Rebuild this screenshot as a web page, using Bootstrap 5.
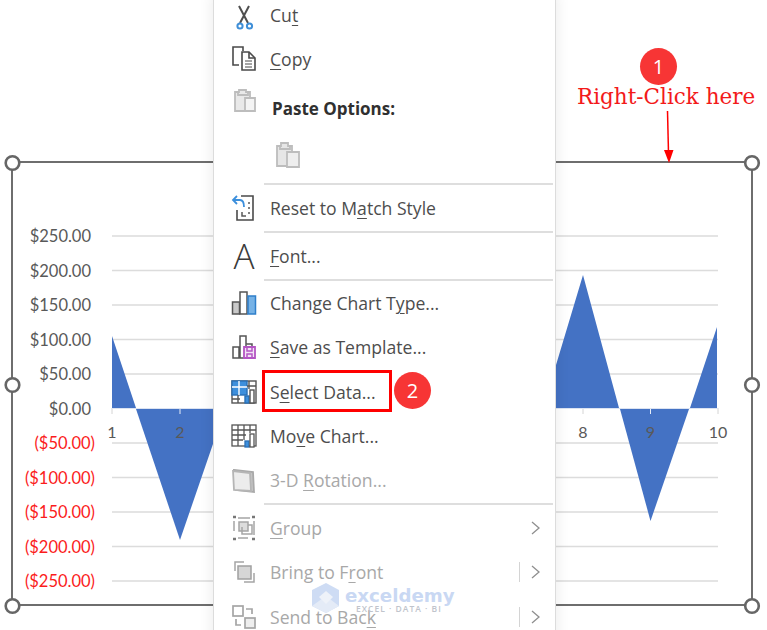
<!DOCTYPE html>
<html lang="en">
<head>
<meta charset="utf-8">
<title>Select Data context menu</title>
<link href="https://cdn.jsdelivr.net/npm/bootstrap@5.3.0/dist/css/bootstrap.min.css" rel="stylesheet">
<style>
html,body{margin:0;background:#fff;overflow:hidden}
.stage{width:767px;height:630px;overflow:hidden}
.chart-canvas{left:0;top:0}
.chart-canvas text{font-family:"Lato","Liberation Sans",sans-serif;font-size:16.5px;fill:#595959}
.chart-canvas text.neg{fill:#fb1c1c}
.chart-canvas text.xl{font-size:16px;text-anchor:middle}
.ctx-menu{left:213px;top:-7.5px;width:343px;background:#fff;border-left:1px solid #dcdcdc;border-right:1px solid #dcdcdc;box-shadow:0 0 14px rgba(0,0,0,.09);font-family:"Open Sans","Liberation Sans",sans-serif;font-size:17.6px;color:#4d4d4d;height:650px}
.ctx-row{height:44.4px;padding-left:17px;white-space:nowrap}
.ctx-row u{text-underline-offset:3px;text-decoration-thickness:1px}
.ctx-ico{width:26px;height:26px;flex:none;margin-right:13px;overflow:visible}
.ctx-off{color:#a8a8a8}
.ctx-paste-head{height:54px;font-weight:700;color:#303030;font-size:17px}
.ctx-paste-head .ctx-ico{margin-bottom:15px;margin-right:15px}
.ctx-paste-icon{height:47.5px;padding-bottom:8px;padding-left:61px}
.ctx-sep{height:2px;background:#dedede;margin-left:50px;margin-right:2px}
.ctx-tall{height:46px}
.ctx-gap{margin-top:1px}
.ctx-a{width:26px;margin-right:13px;font-size:35px;line-height:26px;text-align:center;font-weight:300;color:#3a3a3a}
.ctx-tail{right:14px;top:0;bottom:0}
.ctx-bar{width:1px;height:20px;background:#d4d4d4;margin-right:10px}
.ctx-chev{width:11px;height:16px}
.hilite{left:262px;top:370px;width:130px;height:42px;border:3px solid #f00}
.step{width:37px;height:37px;background:#f73535;color:#fff;font-family:"Open Sans","Liberation Sans",sans-serif;font-size:20px}
.step-a{left:640px;top:48px}
.step-b{left:394px;top:372px}
.note{left:577px;top:81px;font-family:"DejaVu Serif","Liberation Serif",serif;font-size:21.5px;line-height:32px;color:#f31a1a;white-space:nowrap}
.mark-canvas{left:0;top:0;pointer-events:none}
.wm-a{left:345px;top:581px;font-family:"DejaVu Sans","Liberation Sans",sans-serif;font-weight:700;font-size:18.2px;line-height:30px;color:#c9d8f3}
.wm-b{left:356px;top:602px;font-family:"Open Sans","Liberation Sans",sans-serif;font-weight:600;font-size:8.5px;line-height:14px;letter-spacing:1px;color:#c0c4cc;white-space:nowrap}
</style>
</head>
<body>
<div class="stage position-relative">

<svg class="chart-canvas position-absolute" width="767" height="630" viewBox="0 0 767 630">
  <g stroke="#dcdcdc" stroke-width="1.5">
    <path d="M112 236H718M112 270.5H718M112 305H718M112 339.5H718M112 374H718M112 443H718M112 477.5H718M112 512H718M112 546.5H718M112 581H718"/>
  </g>
  <path d="M112 408V414M180 408V414M583 408V414M650.500 408V414M718 408V414" stroke="#d4d4d4" stroke-width="1"/>
  <polygon fill="#4472c4" points="112,336 136,408 112,408"/>
  <polygon fill="#4472c4" points="136,409 225,409 180,540"/>
  <polygon fill="#4472c4" points="540,408 556,365 583,275 619,408"/>
  <polygon fill="#4472c4" points="620,409 689,409 650.500,521"/>
  <polygon fill="#4472c4" points="690,408 717,327 717,408"/>
  <path d="M112 408.500H718" stroke="#dbe3f2" stroke-width="1"/>
  <path d="M180 409V414M650.500 409V414" stroke="#e8eef8" stroke-width="1"/>
  <rect x="12" y="162" width="740" height="443" fill="none" stroke="#6e6e6e" stroke-width="2"/>
  <g fill="#fff" stroke="#666" stroke-width="2.600">
    <circle cx="12.500" cy="163" r="6.800"/><circle cx="752" cy="163" r="6.800"/>
    <circle cx="12.500" cy="385" r="6.800"/><circle cx="752" cy="385" r="6.800"/>
    <circle cx="12.500" cy="606" r="6.800"/><circle cx="752" cy="606" r="6.800"/>
  </g>
  <g text-anchor="end">
    <text x="91" y="242">$250.00</text><text x="91" y="276.500">$200.00</text><text x="91" y="311">$150.00</text>
    <text x="91" y="345.500">$100.00</text><text x="91" y="380">$50.00</text><text x="91" y="414.500">$0.00</text>
    <text class="neg" x="95" y="449">($50.00)</text><text class="neg" x="95" y="484">($100.00)</text>
    <text class="neg" x="95" y="518">($150.00)</text><text class="neg" x="95" y="553">($200.00)</text><text class="neg" x="95" y="587">($250.00)</text>
  </g>
  <text class="xl" x="112" y="438">1</text><text class="xl" x="180" y="438">2</text>
  <text class="xl" x="583" y="438">8</text><text class="xl" x="650.500" y="438">9</text><text class="xl" x="718" y="438">10</text>
  <path d="M667.500 111L668.500 153" stroke="#f00" stroke-width="1.500"/>
  <polygon fill="#f00" points="664,150 673.500,150 669,163"/>
</svg>

<div class="ctx-menu position-absolute">
  <div class="ctx-row d-flex align-items-center">
    <svg class="ctx-ico" viewBox="0 0 26 26" fill="none">
      <path d="M8 4L17 21M18 4L9 21" stroke="#4f4f4f" stroke-width="2"/>
      <circle cx="9" cy="24" r="2.600" stroke="#3f8fd8" stroke-width="2"/><circle cx="18.500" cy="24" r="2.600" stroke="#3f8fd8" stroke-width="2"/>
    </svg>
    <span>Cu<u>t</u></span>
  </div>
  <div class="ctx-row d-flex align-items-center">
    <svg class="ctx-ico" viewBox="0 0 26 26" fill="none" stroke="#4a4a4a" stroke-width="1.600">
      <path d="M8 19H2V1h10v4"/><path d="M11 6h7l6 6v12H11z" fill="#fff"/><path d="M18 6v6h6" /><path d="M14 15h7M14 18h7M14 21h7" stroke-width="1"/>
    </svg>
    <span><u>C</u>opy</span>
  </div>
  <div class="ctx-row ctx-paste-head d-flex align-items-center">
    <svg class="ctx-ico" viewBox="0 0 26 26" fill="#e9e9e9" stroke="#bdbdbd" stroke-width="1.800">
      <path d="M4 4h15v19H4z"/><path d="M8 4V2h7v2h2v3H7V4z"/><path d="M14 10h10v13H14z" fill="#f4f4f4"/>
    </svg>
    <span>Paste Options:</span>
  </div>
  <div class="ctx-row ctx-paste-icon d-flex align-items-center">
    <svg class="ctx-ico" viewBox="0 0 26 26" fill="#e6e6e6" stroke="#bdbdbd" stroke-width="1.800">
      <path d="M2 4h15v20H2z"/><path d="M6 4V1h7v3h2v3H5V4z"/><path d="M12 10h12v15H12z" fill="#eeeeee"/>
    </svg>
  </div>
  <div class="ctx-sep"></div>
  <div class="ctx-row ctx-tall d-flex align-items-center">
    <svg class="ctx-ico" viewBox="0 0 26 26" fill="none">
      <path d="M10 1h12v24H6V15" stroke="#4a4a4a" stroke-width="1.600"/>
      <path d="M2 5h7c3 0 4 3 4 7" stroke="#3c8fdc" stroke-width="1.800"/><path d="M6 1L2 5l4 4" stroke="#3c8fdc" stroke-width="1.800"/>
      <path d="M11 17v4h4M18 7v2M18 12v2M18 17v2" stroke="#5a5a5a" stroke-width="1.500"/>
    </svg>
    <span>Reset to M<u>a</u>tch Style</span>
  </div>
  <div class="ctx-sep"></div>
  <div class="ctx-row ctx-tall d-flex align-items-center">
    <span class="ctx-a">A</span>
    <span><u>F</u>ont...</span>
  </div>
  <div class="ctx-sep"></div>
  <div class="ctx-row d-flex align-items-center">
    <svg class="ctx-ico" viewBox="0 0 26 26" stroke="#555" stroke-width="1.500">
      <rect x="1.500" y="12" width="7" height="12" fill="#c9c9c9"/><rect x="9" y="2" width="7" height="22" fill="#fff"/><rect x="17" y="6" width="7.500" height="18" fill="#76b2e6" stroke="#2f7fca"/>
    </svg>
    <span>Change Chart T<u>y</u>pe...</span>
  </div>
  <div class="ctx-row d-flex align-items-center">
    <svg class="ctx-ico" viewBox="0 0 26 26" fill="#fff" stroke="#555" stroke-width="1.500">
      <path d="M2 13h6v11H2zM9 2h6v22H9z"/><path d="M15 10h6v4"/>
      <path d="M13 13h11v11H13z" fill="#f3e3f5" stroke="#b455c4" stroke-width="1.800"/><path d="M16 13v4h5v-4M16 24v-4h5v4" fill="none" stroke="#b455c4" stroke-width="1.500"/>
    </svg>
    <span><u>S</u>ave as Template...</span>
  </div>
  <div class="ctx-row d-flex align-items-center">
    <svg class="ctx-ico" viewBox="0 0 26 26" fill="none" stroke="#555" stroke-width="1.400">
      <rect x="1" y="2" width="24" height="22" fill="#fff"/>
      <rect x="1" y="2" width="15" height="14" fill="#3d8fdc" stroke="#2a6fb5"/><path d="M1 8h15M8 2v14" stroke="#fff"/>
      <path d="M1 20h8M7 16v8M18 2v8M16 7h9"/>
      <rect x="14" y="17" width="4" height="7" fill="#3d8fdc" stroke="#2a6fb5"/><rect x="19" y="11" width="4" height="13" fill="#fff"/>
    </svg>
    <span>S<u>e</u>lect Data...</span>
  </div>
  <div class="ctx-row d-flex align-items-center">
    <svg class="ctx-ico" viewBox="0 0 26 26" fill="none" stroke="#555" stroke-width="1.300">
      <rect x="1" y="2" width="24" height="21" fill="#fff"/><path d="M1 7h24M1 12h14M1 17h11M7 2v21M13 2v15M19 2v8"/>
      <rect x="14" y="18" width="4" height="6" fill="#3d8fdc" stroke="#2a6fb5"/><rect x="19" y="11" width="4" height="13" fill="#fff"/>
    </svg>
    <span>Mo<u>v</u>e Chart...</span>
  </div>
  <div class="ctx-row ctx-off d-flex align-items-center">
    <svg class="ctx-ico" viewBox="0 0 26 26" stroke="#a9a9a9" stroke-width="1.800">
      <path d="M3 2l19 2 1 20-18-2z" fill="#c4c4c4"/><path d="M2 3l17 2 1 18-17-1z" fill="#ececec" stroke="#b5b5b5"/>
    </svg>
    <span>3-D <u>R</u>otation...</span>
  </div>
  <div class="ctx-sep"></div>
  <div class="ctx-row ctx-off ctx-gap position-relative d-flex align-items-center">
    <svg class="ctx-ico" viewBox="0 0 26 26" fill="none" stroke="#a5a5a5" stroke-width="1.500">
      <path d="M2 2h3M21 2h3M2 24h3M21 24h3" stroke="#777" stroke-width="2.400"/>
      <path d="M3 6v10M23 6v14M7 3h12M7 23h10"/><rect x="8" y="7" width="9" height="9" fill="#dcdcdc"/><path d="M11 12v7h10v-9h-4"/>
    </svg>
    <span><u>G</u>roup</span>
    <div class="ctx-tail position-absolute d-flex align-items-center">
      <svg class="ctx-chev" viewBox="0 0 11 16" fill="none" stroke="#8f8f8f" stroke-width="1.300"><path d="M2 2l7 6-7 6"/></svg>
    </div>
  </div>
  <div class="ctx-row ctx-off position-relative d-flex align-items-center">
    <svg class="ctx-ico" viewBox="0 0 26 26" fill="none" stroke="#a5a5a5" stroke-width="1.500">
      <path d="M4 12V3h9M23 14v9h-10"/><rect x="7" y="7" width="13" height="13" fill="#d6d6d6" stroke="#a0a0a0"/>
    </svg>
    <span>Bring to F<u>r</u>ont</span>
    <div class="ctx-tail position-absolute d-flex align-items-center">
      <div class="ctx-bar"></div>
      <svg class="ctx-chev" viewBox="0 0 11 16" fill="none" stroke="#8f8f8f" stroke-width="1.300"><path d="M2 2l7 6-7 6"/></svg>
    </div>
  </div>
  <div class="ctx-row ctx-off position-relative d-flex align-items-center">
    <svg class="ctx-ico" viewBox="0 0 26 26" fill="none" stroke="#a5a5a5" stroke-width="1.700">
      <rect x="2" y="2" width="10" height="10" fill="#fff"/><rect x="14" y="14" width="10" height="10" fill="#eee"/>
      <path d="M15 5h6v5M5 15v6h5"/>
    </svg>
    <span>Send to Bac<u>k</u></span>
    <div class="ctx-tail position-absolute d-flex align-items-center">
      <div class="ctx-bar"></div>
      <svg class="ctx-chev" viewBox="0 0 11 16" fill="none" stroke="#8f8f8f" stroke-width="1.300"><path d="M2 2l7 6-7 6"/></svg>
    </div>
  </div>
</div>

<svg class="mark-canvas position-absolute" width="767" height="630" viewBox="0 0 767 630">
  <polygon points="326,583 339,590 339,606 326,613 312,606 312,590" fill="#c6d6f2" opacity=".85"/>
  <polygon points="326,596 339,606 326,613 312,606" fill="#e4ebf7"/>
  <polygon points="326,591 333,597 326,604 319,597" fill="#eef2f9"/>
</svg>
<span class="wm-a position-absolute">exceldemy</span>
<span class="wm-b position-absolute">EXCEL · DATA · BI</span>

<div class="hilite position-absolute"></div>
<div class="step step-a position-absolute rounded-circle d-flex align-items-center justify-content-center">1</div>
<div class="step step-b position-absolute rounded-circle d-flex align-items-center justify-content-center">2</div>
<div class="note position-absolute">Right-Click here</div>
</div>
<script src="https://cdn.jsdelivr.net/npm/bootstrap@5.3.0/dist/js/bootstrap.bundle.min.js"></script>
</body>
</html>
